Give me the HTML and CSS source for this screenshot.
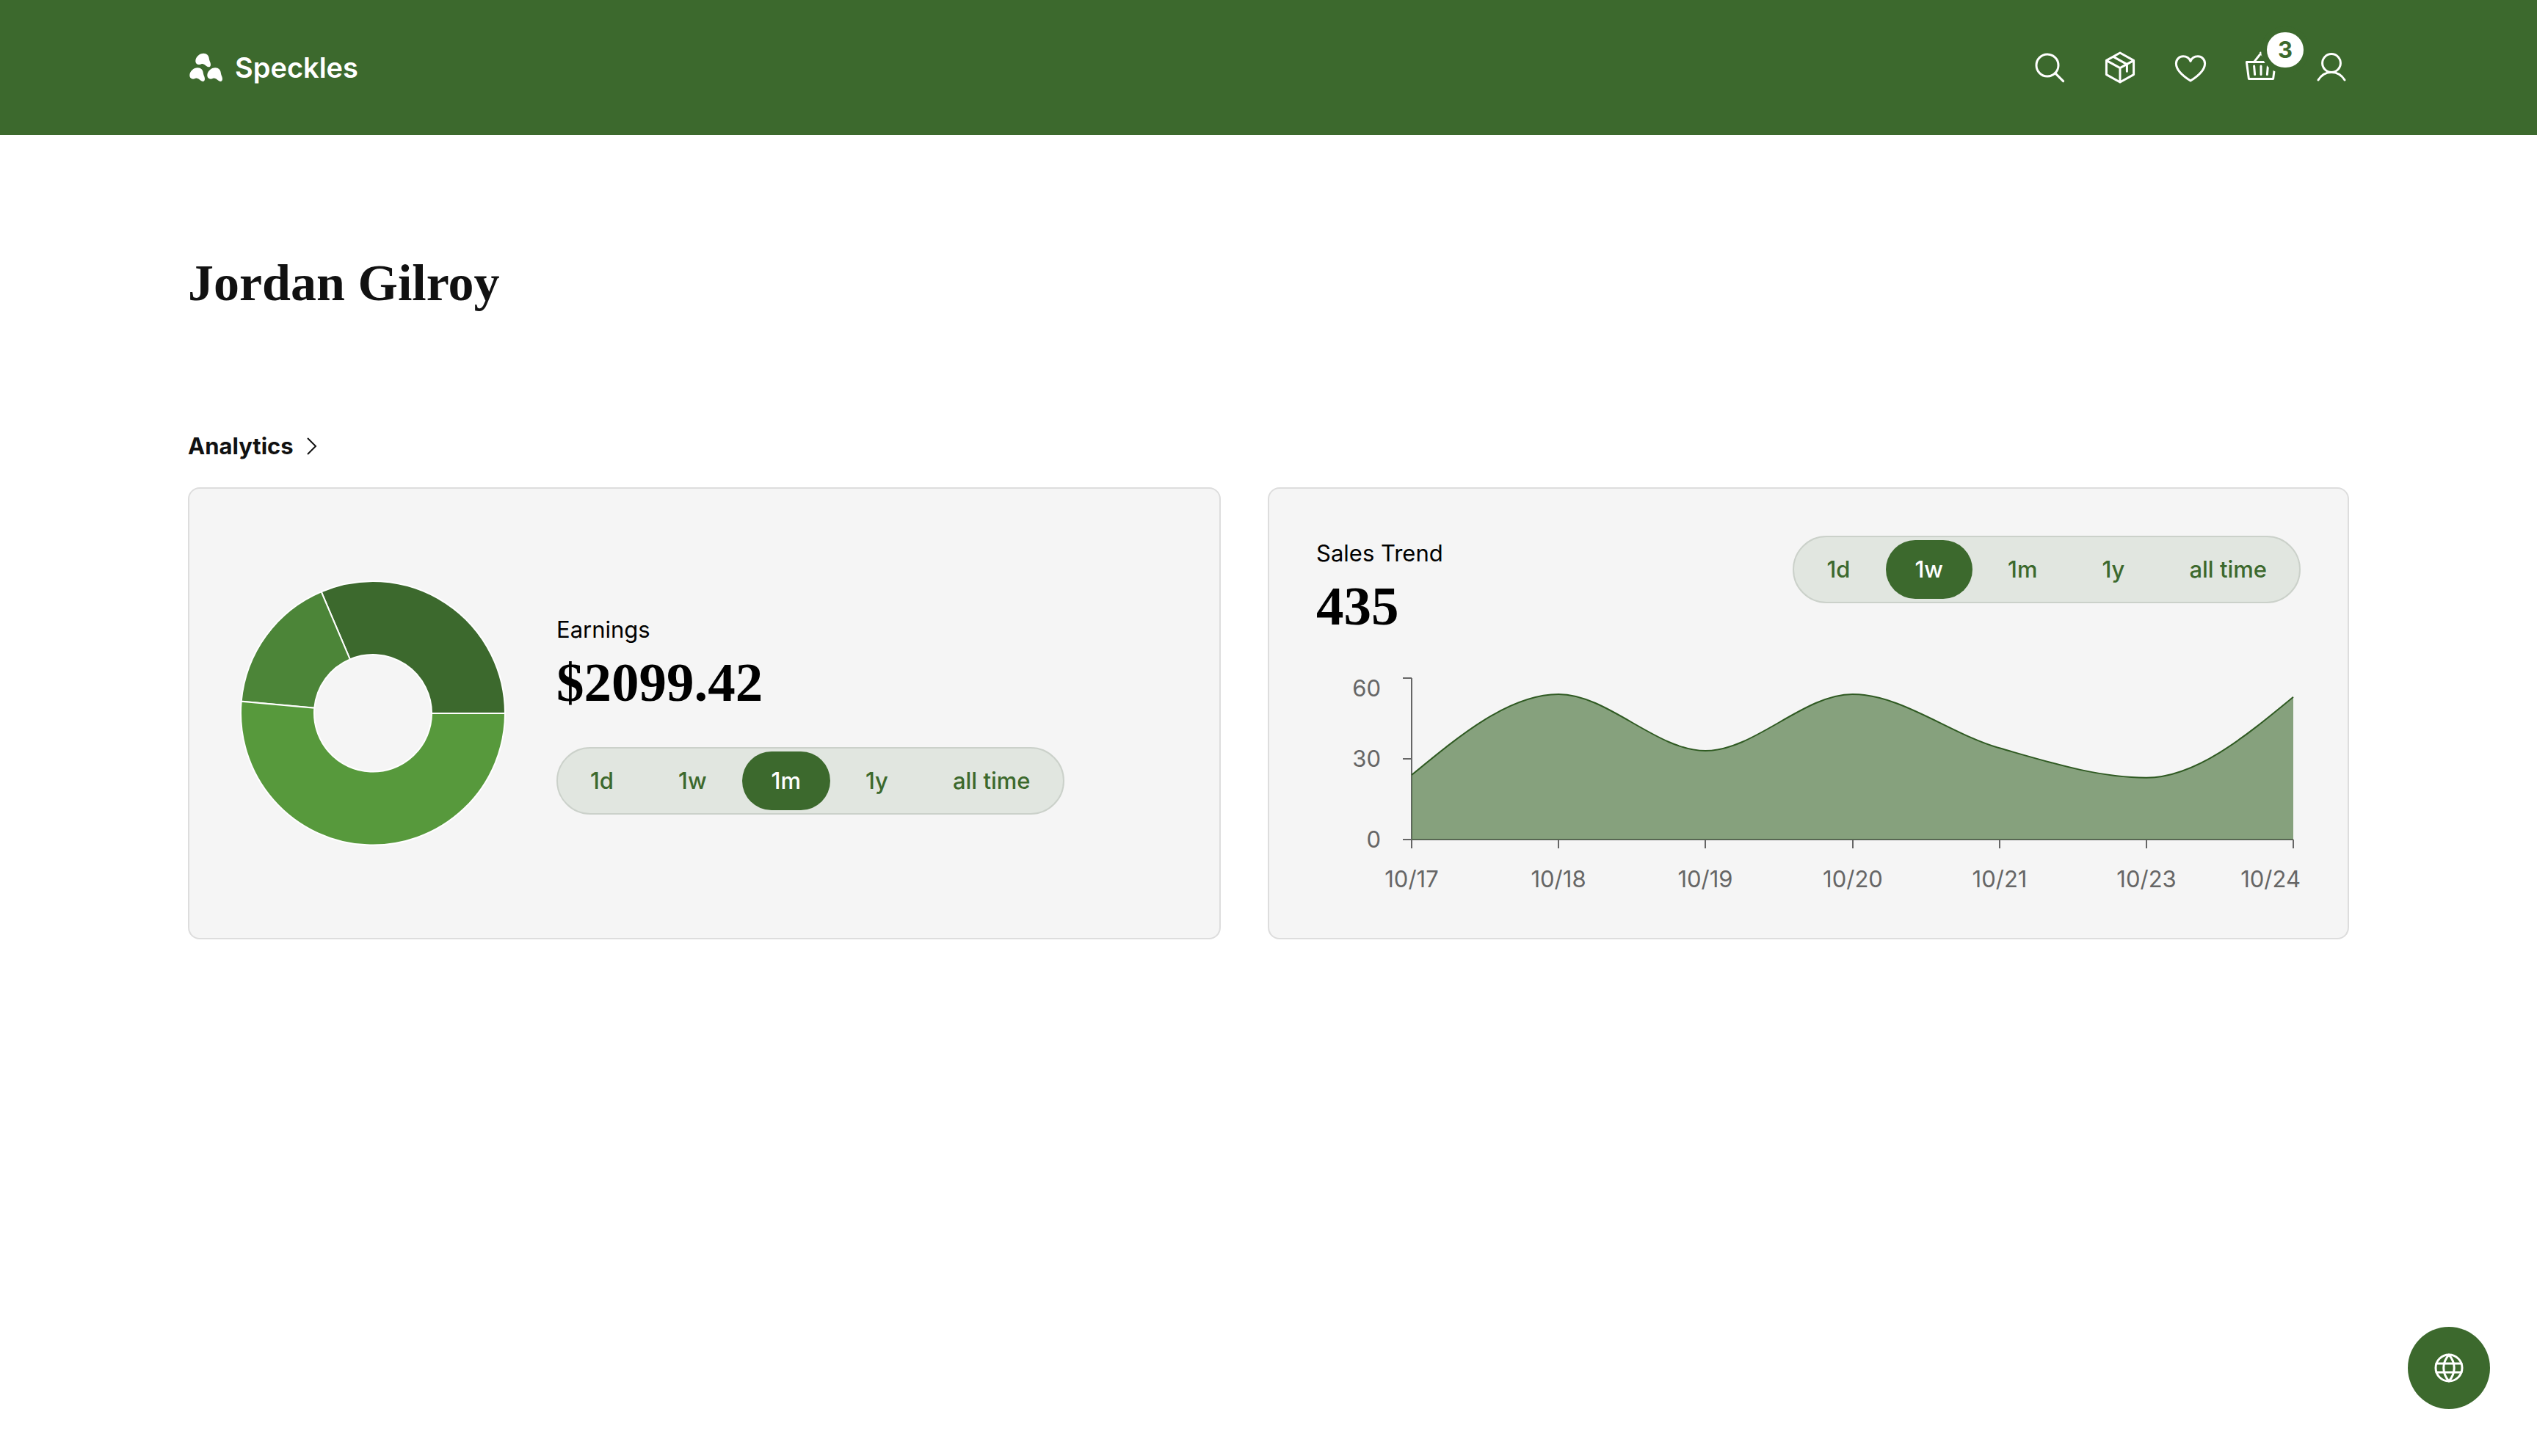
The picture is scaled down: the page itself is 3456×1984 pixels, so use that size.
FILE: index.html
```html
<!DOCTYPE html>
<html lang="en">
<head>
<meta charset="utf-8">
<meta name="viewport" content="width=device-width, initial-scale=1">
<title>Speckles – Jordan Gilroy</title>
<link rel="stylesheet" href="styles.css">
</head>
<body>
<header class="site-header">
  <a class="brand" href="#">
    <svg class="brand-mark" viewBox="0 0 48 48" aria-hidden="true">
      <defs>
        <path id="speckle" d="M0 10.500C0 5 5.500 0 11 0C15.500 0 18 3 18.500 7C19 11 20.700 12 20.700 15.500C20.700 18.500 18.500 19.300 16 18C13 16.500 12 14 9 14.200C7 14.400 5.800 15.800 3.500 15.200C1.200 14.600 0 12.800 0 10.500Z"/>
      </defs>
      <use href="#speckle" x="10.300" y="4.700"/>
      <use href="#speckle" x="2.300" y="24.300"/>
      <use href="#speckle" x="26.300" y="24.300"/>
    </svg>
    <span>Speckles</span>
  </a>
  <nav class="actions" aria-label="Account">
    <button class="icon-button" type="button" aria-label="Search">
      <svg class="icon" viewBox="0 0 24 24"><circle cx="10.500" cy="10.500" r="7.500"/><path d="M15.800 15.800L21.300 21.300"/></svg>
    </button>
    <a class="icon-button" href="#" aria-label="Orders">
      <svg class="icon" viewBox="0 0 24 24"><path d="M12 2L21.300 7.200V16.800L12 22L2.700 16.800V7.200ZM2.700 7.200L12 12.300L21.300 7.200M12 12.300V22M7.500 4.700L16.700 9.800V14.600"/></svg>
    </a>
    <a class="icon-button" href="#" aria-label="Favourites">
      <svg class="icon" viewBox="0 0 24 24"><path d="M12 21C8.500 18.800 2.200 14.500 2.200 9.200C2.200 6.500 4.300 4.400 7 4.400C9.300 4.400 11.200 5.600 12 7.700C12.800 5.600 14.700 4.400 17 4.400C19.700 4.400 21.800 6.500 21.800 9.200C21.800 14.500 15.500 18.800 12 21Z"/></svg>
    </a>
    <a class="icon-button" href="#" aria-label="Basket, 3 items">
      <svg class="icon" viewBox="0 0 24 24"><path d="M2.200 8.300H21.800L20.300 19.700H3.700ZM7.200 8.300L12.200 2M16.800 8.300L11.800 2M12 11V16.800M7.300 11L7.800 16.800M16.700 11L16.200 16.800"/></svg>
      <span class="badge">3</span>
    </a>
    <a class="icon-button" href="#" aria-label="Profile">
      <svg class="icon" viewBox="0 0 24 24"><circle cx="12" cy="9" r="6.200"/><path d="M3 20.500C5 17.200 8 15.200 12 15.200S19 17.200 21 20.500"/></svg>
    </a>
  </nav>
</header>

<main class="page">
  <h1 class="page-title">Jordan Gilroy</h1>
  <section class="analytics">
    <h2 class="section-title"><a class="section-link" href="#">Analytics
      <svg class="chevron" viewBox="0 0 32 32" aria-hidden="true"><path d="M11 5L22 16L11 27"/></svg></a></h2>
    <div class="cards">
      <article class="card card-earnings">
        <svg class="donut" viewBox="0 0 372 372" role="img" aria-label="Earnings split">
          <path class="slice-dark" d="M366 186A180 180 0 0 0 115.700 20.300L154.800 112.400A80 80 0 0 1 266 186Z"/>
          <path class="slice-mid" d="M115.700 20.300A180 180 0 0 0 6.700 169.700L106.300 178.700A80 80 0 0 1 154.800 112.400Z"/>
          <path class="slice-light" d="M6.700 169.700A180 180 0 1 0 366 186H266A80 80 0 1 1 106.300 178.700Z"/>
        </svg>
        <div class="stat">
          <h3 class="stat-label">Earnings</h3>
          <p class="stat-value">$2099.42</p>
          <div class="range stat-range" role="group" aria-label="Earnings period">
            <button class="range-option" type="button">1d</button>
            <button class="range-option" type="button">1w</button>
            <button class="range-option is-active" type="button" aria-pressed="true">1m</button>
            <button class="range-option" type="button">1y</button>
            <button class="range-option" type="button">all time</button>
          </div>
        </div>
      </article>
      <article class="card card-sales">
        <div class="card-head">
          <div class="stat">
            <h3 class="stat-label">Sales Trend</h3>
            <p class="stat-value">435</p>
          </div>
          <div class="range" role="group" aria-label="Sales period">
            <button class="range-option" type="button">1d</button>
            <button class="range-option is-active" type="button" aria-pressed="true">1w</button>
            <button class="range-option" type="button">1m</button>
            <button class="range-option" type="button">1y</button>
            <button class="range-option" type="button">all time</button>
          </div>
        </div>
        <svg class="trend" viewBox="0 0 1341 300" role="img" aria-label="Sales per day">
          <path class="axis" d="M130 10V230M118 10H130M118 120H130M118 230H1331M130 230V242M330 230V242M530 230V242M731 230V242M931 230V242M1131 230V242M1331 230V242"/>
          <path class="area" d="M130 142C196.700 87 263.400 32 330.200 32C396.900 32 463.600 109 530.300 109C597 109 663.800 32 730.500 32C797.200 32 863.900 86.400 930.700 105.300C997.400 124.300 1064.100 145.700 1130.800 145.700C1197.600 145.700 1264.300 90.700 1331 35.700V230H130Z"/>
          <path class="curve" d="M130 142C196.700 87 263.400 32 330.200 32C396.900 32 463.600 109 530.300 109C597 109 663.800 32 730.500 32C797.200 32 863.900 86.400 930.700 105.300C997.400 124.300 1064.100 145.700 1130.800 145.700C1197.600 145.700 1264.300 90.700 1331 35.700"/>
          <g class="tick tick-y">
            <text x="88" y="35">60</text><text x="88" y="131">30</text><text x="88" y="241">0</text>
          </g>
          <g class="tick tick-x">
            <text x="130" y="295">10/17</text><text x="330" y="295">10/18</text><text x="530" y="295">10/19</text><text x="731" y="295">10/20</text><text x="931" y="295">10/21</text><text x="1131" y="295">10/23</text><text class="tick-last" x="1341" y="295">10/24</text>
          </g>
        </svg>
      </article>
    </div>
  </section>
</main>

<button class="language-button" type="button" aria-label="Change language">
  <svg class="icon" viewBox="0 0 24 24"><circle cx="12" cy="12" r="9"/><path d="M3.500 9H20.500M3.500 15H20.500"/><path d="M12 3C7.200 8.500 7.200 15.500 12 21C16.800 15.500 16.800 8.500 12 3Z"/></svg>
</button>
</body>
</html>
```
FILE: styles.css
```css
:root {
  --green: #3c692d;
  --sans: Inter, "Liberation Sans", sans-serif;
  --serif: "Liberation Serif", serif;
}

* { box-sizing: border-box; }

body {
  margin: 0;
  background: #fff;
  color: #000;
  font: 400 31px/48px var(--sans);
}

h1, h2, h3, p { margin: 0; }
a { color: inherit; text-decoration: none; }
button { font: inherit; color: inherit; border: 0; padding: 0; cursor: pointer; }

.site-header {
  display: flex;
  align-items: center;
  justify-content: space-between;
  padding: 68px 256px;
  background: var(--green);
  color: #fff;
}

.brand {
  display: flex;
  align-items: center;
  gap: 16px;
  font-size: 38px;
  font-weight: 600;
}
.brand-mark { width: 48px; height: 48px; fill: #fff; }

.actions { display: flex; gap: 48px; }
.icon-button { position: relative; display: flex; background: none; }
.icon {
  width: 48px;
  height: 48px;
  fill: none;
  stroke: #fff;
  stroke-width: 1.5;
  stroke-linecap: round;
  stroke-linejoin: round;
}
.badge {
  position: absolute;
  top: -24px;
  left: 32px;
  width: 50px;
  height: 48px;
  border-radius: 24px;
  background: #fff;
  box-shadow: 0 0 0 8px var(--green);
  color: var(--green);
  font-weight: 700;
  text-align: center;
}

.page { padding: 154px 256px 64px; }
.page-title {
  margin-bottom: 150px;
  color: #111;
  font: 700 70px/96px var(--serif);
}
.section-title {
  margin-bottom: 32px;
  color: #111;
  font-size: 31px;
  font-weight: 700;
}
.section-link { display: inline-flex; align-items: center; gap: 8px; }
.chevron { width: 32px; height: 32px; fill: none; stroke: #111; stroke-width: 2; }

.cards {
  display: grid;
  grid-template-columns: minmax(0, 1407fr) minmax(0, 1473fr);
  gap: 64px;
}
.card {
  padding: 64px;
  border: 2px solid #ddd;
  border-radius: 16px;
  background: #f5f5f5;
}
.card-earnings { display: flex; align-items: center; gap: 64px; }
.card-head {
  display: flex;
  align-items: flex-start;
  justify-content: space-between;
  margin-bottom: 40px;
}

.stat-label { font-size: 31px; font-weight: 400; }
.stat-value { font: 700 75px/96px var(--serif); }
.stat-range { margin-top: 40px; }

.range {
  display: inline-flex;
  gap: 8px;
  padding: 4px;
  border: 2px solid #cbd1ca;
  border-radius: 46px;
  background: #e1e6e0;
  color: var(--green);
}
.range-option {
  padding: 16px 40px;
  border-radius: 40px;
  background: none;
  font-weight: 500;
  white-space: nowrap;
}
.range-option.is-active { background: var(--green); color: #fff; }

.donut { flex: none; width: 372px; height: 372px; stroke: #fff; stroke-width: 2; }
.slice-dark { fill: var(--green); }
.slice-mid { fill: #4c8538; }
.slice-light { fill: #57993c; }

.trend { display: block; width: 100%; height: auto; overflow: visible; }
.axis { fill: none; stroke: #666; stroke-width: 2; }
.area { fill: var(--green); fill-opacity: 0.6; }
.curve { fill: none; stroke: #2f5a22; stroke-width: 2; }
.tick { fill: #666; font-size: 31px; }
.tick-y { text-anchor: end; }
.tick-x { text-anchor: middle; }
.tick-last { text-anchor: end; }

.language-button {
  position: fixed;
  right: 64px;
  bottom: 64px;
  display: grid;
  place-items: center;
  width: 112px;
  height: 112px;
  border-radius: 50%;
  background: var(--green);
}
```
